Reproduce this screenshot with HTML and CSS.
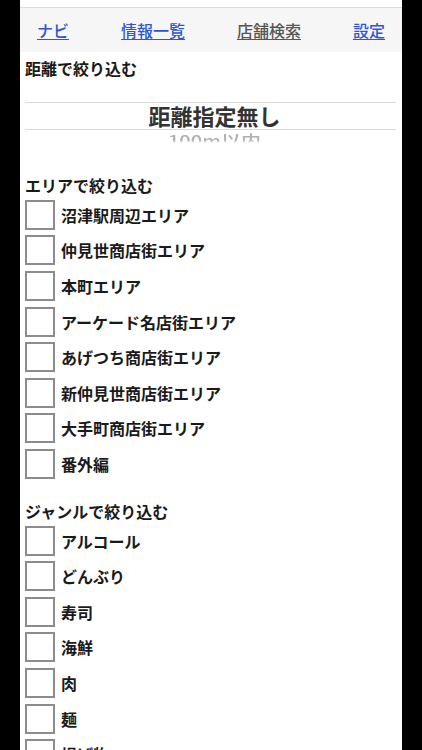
FILE: index.html
```html
<!DOCTYPE html>
<html lang="ja">
<head>
<meta charset="utf-8">
<title>店舗検索</title>
<link rel="stylesheet" href="styles.css">
</head>
<body>
<div class="screen">
  <div class="status"></div>
  <nav class="nav">
    <a class="nav-link" href="#">ナビ</a>
    <a class="nav-link" href="#">情報一覧</a>
    <a class="nav-link current" href="#">店舗検索</a>
    <a class="nav-link" href="#">設定</a>
  </nav>

  <div class="section-title first">距離で絞り込む</div>
  <div class="picker">
    <div class="picker-sel">距離指定無し</div>
    <div class="picker-next"><span>100m以内</span></div>
  </div>

  <div class="section-title">エリアで絞り込む</div>
  <ul class="checks">
    <li class="row"><span class="box"></span><span class="label">沼津駅周辺エリア</span></li>
    <li class="row"><span class="box"></span><span class="label">仲見世商店街エリア</span></li>
    <li class="row"><span class="box"></span><span class="label">本町エリア</span></li>
    <li class="row"><span class="box"></span><span class="label">アーケード名店街エリア</span></li>
    <li class="row"><span class="box"></span><span class="label">あげつち商店街エリア</span></li>
    <li class="row"><span class="box"></span><span class="label">新仲見世商店街エリア</span></li>
    <li class="row"><span class="box"></span><span class="label">大手町商店街エリア</span></li>
    <li class="row"><span class="box"></span><span class="label">番外編</span></li>
  </ul>

  <div class="section-title genre">ジャンルで絞り込む</div>
  <ul class="checks">
    <li class="row"><span class="box"></span><span class="label">アルコール</span></li>
    <li class="row"><span class="box"></span><span class="label">どんぶり</span></li>
    <li class="row"><span class="box"></span><span class="label">寿司</span></li>
    <li class="row"><span class="box"></span><span class="label">海鮮</span></li>
    <li class="row"><span class="box"></span><span class="label">肉</span></li>
    <li class="row"><span class="box"></span><span class="label">麺</span></li>
    <li class="row"><span class="box"></span><span class="label">揚げ物</span></li>
  </ul>
</div>
</body>
</html>
```
FILE: styles.css
```css
html, body {
  margin: 0;
  padding: 0;
  background: #000;
}
.screen {
  width: 382px;
  height: 750px;
  margin-left: 20px;
  background: #fff;
  overflow: hidden;
  font-family: "Noto Sans CJK JP", "Noto Sans", sans-serif;
  color: #1a1a1a;
  font-weight: 700;
}
.status {
  height: 7px;
  background: #fff;
}
.nav {
  height: 44px;
  border-top: 1px solid #dcdcdc;
  background: #f6f6f7;
  display: flex;
  justify-content: space-between;
  align-items: center;
  padding: 0 17px 0 17px;
}
.nav-link {
  font-size: 16px;
  line-height: 20px;
  color: #2f55d4;
  text-decoration: underline;
  text-underline-offset: 2px;
  font-weight: 500;
}
.nav-link.current {
  color: #555;
}
.section-title {
  font-size: 16px;
  line-height: 24px;
  height: 24px;
  padding-left: 5px;
}
.section-title.first {
  margin-top: 4px;
}
.section-title.genre {
  margin-top: 17px;
}
.picker {
  margin: 0 6px 0 5px;
  padding-top: 22px;
  height: 71px;
}
.picker-sel {
  border-top: 1px solid #d9d9d9;
  border-bottom: 1px solid #d9d9d9;
  height: 26px;
  line-height: 24px;
  font-size: 22px;
  text-align: center;
  color: #333;
  padding-left: 8px;
}
.picker-next {
  text-align: center;
  padding-left: 8px;
  padding-top: 2px;
}
.picker-next span {
  display: inline-block;
  font-size: 20px;
  line-height: 20px;
  font-weight: 500;
  color: #b0b0b0;
  transform: scaleY(0.8);
  transform-origin: top center;
  -webkit-mask-image: linear-gradient(to bottom, #000 0%, #000 45%, transparent 62%);
  mask-image: linear-gradient(to bottom, #000 0%, #000 45%, transparent 62%);
}
.checks {
  list-style: none;
  margin: 0;
  padding: 0;
}
.row {
  height: 35.6px;
  display: flex;
  align-items: center;
}
.box {
  box-sizing: border-box;
  width: 30px;
  height: 30px;
  margin-left: 5px;
  border: 2px solid #8c8c8c;
  flex: none;
}
.label {
  margin-left: 6px;
  font-size: 16px;
  line-height: 20px;
}
```
